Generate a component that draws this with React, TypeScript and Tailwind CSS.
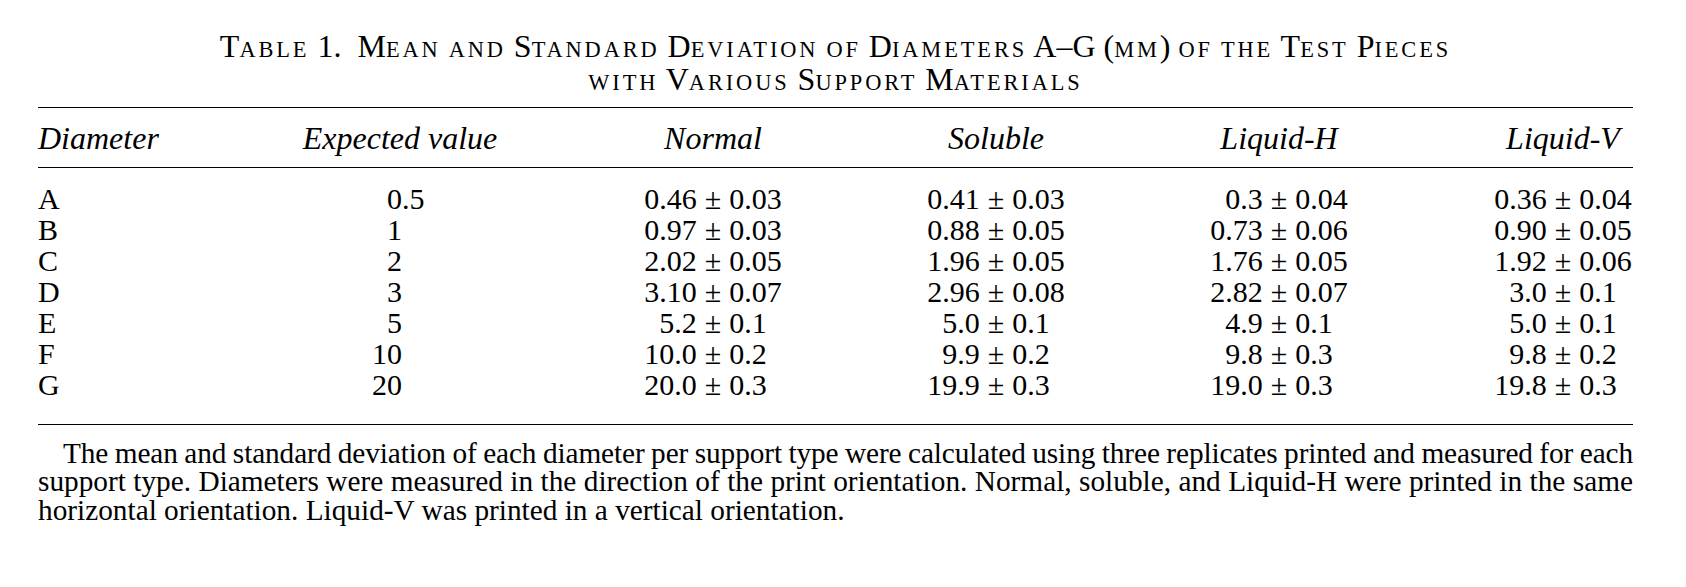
import React from "react";

type PMv = [string, string];
type Row = {
  d: string;
  e: [string, string];
  v: PMv[];
};

const rows: Row[] = [
  { d: "A", e: ["0", ".5"], v: [["0.46", "0.03"], ["0.41", "0.03"], ["0.3", "0.04"], ["0.36", "0.04"]] },
  { d: "B", e: ["1", ""], v: [["0.97", "0.03"], ["0.88", "0.05"], ["0.73", "0.06"], ["0.90", "0.05"]] },
  { d: "C", e: ["2", ""], v: [["2.02", "0.05"], ["1.96", "0.05"], ["1.76", "0.05"], ["1.92", "0.06"]] },
  { d: "D", e: ["3", ""], v: [["3.10", "0.07"], ["2.96", "0.08"], ["2.82", "0.07"], ["3.0", "0.1"]] },
  { d: "E", e: ["5", ""], v: [["5.2", "0.1"], ["5.0", "0.1"], ["4.9", "0.1"], ["5.0", "0.1"]] },
  { d: "F", e: ["10", ""], v: [["10.0", "0.2"], ["9.9", "0.2"], ["9.8", "0.3"], ["9.8", "0.2"]] },
  { d: "G", e: ["20", ""], v: [["20.0", "0.3"], ["19.9", "0.3"], ["19.0", "0.3"], ["19.8", "0.3"]] },
];

function PM({ a, b }: { a: string; b: string }) {
  return (
    <div className="flex justify-center whitespace-nowrap">
      <span className="w-[53px] text-right">{a}</span>
      <span className="mx-[8px]">±</span>
      <span className="w-[53px] text-left">{b}</span>
    </div>
  );
}

/* Small caps: capitals at full size, lowercase letters set as smaller, slightly tracked capitals */
function SC({ text }: { text: string }) {
  const parts: { small: boolean; s: string }[] = [];
  for (const ch of text) {
    const small = /[a-z]/.test(ch);
    const last = parts[parts.length - 1];
    if (last && last.small === small) last.s += ch;
    else parts.push({ small, s: ch });
  }
  return (
    <>
      {parts.map((p, i) =>
        p.small ? (
          <span key={i} className="text-[22.4px] leading-none tracking-[2.9px]">
            {p.s.toUpperCase()}
          </span>
        ) : (
          <span key={i}>{p.s}</span>
        )
      )}
    </>
  );
}

const grid = "grid grid-cols-[263px_198px_428px_138px_428px_140px]";

export default function App() {
  return (
    <div className="w-[1686px] h-[587px] bg-white text-black font-['Liberation_Serif',serif] overflow-hidden">
      <div className="pl-[38px] pt-[30px] w-[1633px]">
        {/* Title */}
        <div className="text-[32px] leading-[33px] text-center w-[1595px] whitespace-nowrap">
          <div className="h-[33px]">
            <SC text="Table 1." />
            {"\u2002"}
            <SC text="Mean and Standard Deviation of Diameters A–G (mm) of the Test Pieces" />
          </div>
          <div className="h-[33px]">
            <SC text="with Various Support Materials" />
          </div>
        </div>

        <div className="mt-[11px] w-[1595px] border-t border-black" />

        {/* Header */}
        <div className={`${grid} italic text-[32px] leading-[32px] pt-[14px] pb-[13px]`}>
          <div className="text-left">Diameter</div>
          <div className="text-center">Expected value</div>
          <div className="text-center">Normal</div>
          <div className="text-center">Soluble</div>
          <div className="text-center">Liquid-H</div>
          <div className="text-center">Liquid-V</div>
        </div>

        <div className="w-[1595px] border-t border-black" />

        {/* Body */}
        <div className="pt-[15px] pb-[24px] text-[30px] leading-[31px]">
          {rows.map((r) => (
            <div key={r.d} className={grid}>
              <div className="text-left">{r.d}</div>
              <div className="flex justify-center whitespace-nowrap pl-[4px]">
                <span className="w-[40px] text-right">{r.e[0]}</span>
                <span className="w-[40px] text-left">{r.e[1]}</span>
              </div>
              {r.v.map((p, i) => (
                <PM key={i} a={p[0]} b={p[1]} />
              ))}
            </div>
          ))}
        </div>

        <div className="w-[1595px] border-t border-black" />

        {/* Footnote */}
        <div className="mt-[13.5px] w-[1595px] text-[29.3px] leading-[28.5px] text-justify">
          <div className="indent-[25px] [text-align-last:justify] [word-spacing:-3px] tracking-[-0.1px] whitespace-nowrap">
            The mean and standard deviation of each diameter per support type were calculated using three replicates printed and measured for each
          </div>
          <div className="[text-align-last:justify] [word-spacing:-3px] whitespace-nowrap">
            support type. Diameters were measured in the direction of the print orientation. Normal, soluble, and Liquid-H were printed in the same
          </div>
          <div className="text-left whitespace-nowrap">
            horizontal orientation. Liquid-V was printed in a vertical orientation.
          </div>
        </div>
      </div>
    </div>
  );
}
